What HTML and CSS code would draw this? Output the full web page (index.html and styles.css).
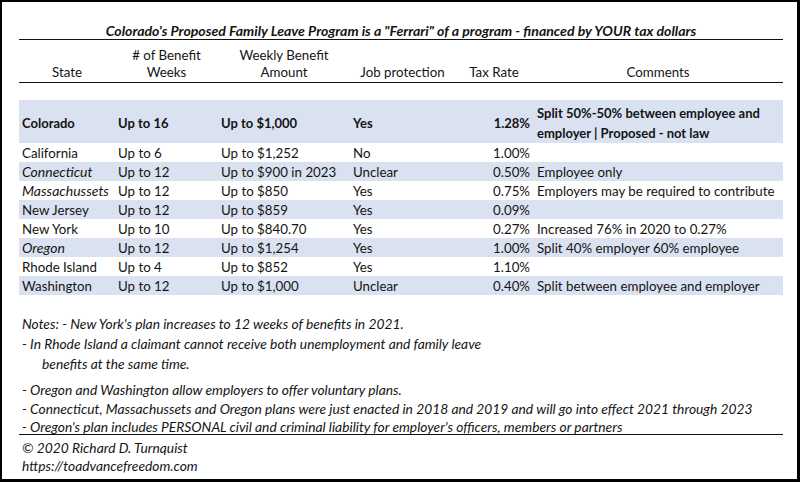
FILE: index.html
```html
<!DOCTYPE html>
<html lang="en">
<head>
<meta charset="utf-8">
<title>Colorado Family Leave Program</title>
<link rel="stylesheet" href="styles.css">
</head>
<body>
<div class="frame">
  <div class="sheet">
    <h1 class="title">Colorado's Proposed Family Leave Program is a "Ferrari" of a program - financed by YOUR tax dollars</h1>
    <table class="grid">
      <colgroup>
        <col class="c-state"><col class="c-weeks"><col class="c-amount"><col class="c-job"><col class="c-tax"><col class="c-comm">
      </colgroup>
      <thead>
        <tr>
          <th>State</th>
          <th># of Benefit<br>Weeks</th>
          <th>Weekly Benefit<br>Amount</th>
          <th>Job protection</th>
          <th>Tax Rate</th>
          <th>Comments</th>
        </tr>
      </thead>
      <tbody>
        <tr class="blank"><td colspan="6"></td></tr>
        <tr class="lead shade">
          <td>Colorado</td><td>Up to 16</td><td>Up to $1,000</td><td>Yes</td><td class="num">1.28%</td>
          <td class="comm">Split 50%-50% between employee and employer | Proposed - not law</td>
        </tr>
        <tr><td>California</td><td>Up to 6</td><td>Up to $1,252</td><td>No</td><td class="num">1.00%</td><td class="comm"></td></tr>
        <tr class="shade"><td class="it">Connecticut</td><td>Up to 12</td><td>Up to $900 in 2023</td><td>Unclear</td><td class="num">0.50%</td><td class="comm">Employee only</td></tr>
        <tr><td class="it">Massachussets</td><td>Up to 12</td><td>Up to $850</td><td>Yes</td><td class="num">0.75%</td><td class="comm">Employers may be required to contribute</td></tr>
        <tr class="shade"><td>New Jersey</td><td>Up to 12</td><td>Up to $859</td><td>Yes</td><td class="num">0.09%</td><td class="comm"></td></tr>
        <tr><td>New York</td><td>Up to 10</td><td>Up to $840.70</td><td>Yes</td><td class="num">0.27%</td><td class="comm">Increased 76% in 2020 to 0.27%</td></tr>
        <tr class="shade"><td class="it">Oregon</td><td>Up to 12</td><td>Up to $1,254</td><td>Yes</td><td class="num">1.00%</td><td class="comm">Split 40% employer 60% employee</td></tr>
        <tr><td>Rhode Island</td><td>Up to 4</td><td>Up to $852</td><td>Yes</td><td class="num">1.10%</td><td class="comm"></td></tr>
        <tr class="shade"><td>Washington</td><td>Up to 12</td><td>Up to $1,000</td><td>Unclear</td><td class="num">0.40%</td><td class="comm">Split between employee and employer</td></tr>
      </tbody>
    </table>
    <div class="notes">
      <p class="note n1">Notes: - New York's plan increases to 12 weeks of benefits in 2021.</p>
      <p class="note n2">- In Rhode Island a claimant cannot receive both unemployment and family leave<br><span class="indent">benefits at the same time.</span></p>
      <p class="note n3">- Oregon and Washington allow employers to offer voluntary plans.</p>
      <p class="note n4">- Connecticut, Massachussets and Oregon plans were just enacted in 2018 and 2019 and will go into effect 2021 through 2023</p>
      <p class="note n5">- Oregon's plan includes PERSONAL civil and criminal liability for employer's officers, members or partners</p>
      <p class="note n6">© 2020 Richard D. Turnquist</p>
      <p class="note n7">https://toadvancefreedom.com</p>
    </div>
  </div>
</div>
</body>
</html>
```

FILE: styles.css
```css
* { box-sizing: border-box; }

html, body {
  margin: 0;
  padding: 0;
  background: #ffffff;
}

.frame {
  width: 800px;
  height: 482px;
  border-style: solid;
  border-color: #000;
  border-width: 2px 3px 3px 2px;
  background: #fff;
  overflow: hidden;
}

.sheet {
  padding: 20px 0 0 17px;
  width: 781px;
  font-family: Lato, "Open Sans", sans-serif;
  font-size: 13.3px;
  color: #141414;
}

.title {
  margin: 0;
  height: 18px;
  line-height: 17px;
  font-size: 14.1px;
  font-weight: 700;
  font-style: italic;
  text-align: center;
  border-bottom: 1px solid #111;
}

.grid {
  width: 764px;
  border-collapse: collapse;
  table-layout: fixed;
}

.c-state { width: 96px; }
.c-weeks { width: 103px; }
.c-amount { width: 132px; }
.c-job { width: 105px; }
.c-tax { width: 78px; }
.c-comm { width: 250px; }

.grid th {
  height: 42px;
  padding: 0;
  line-height: 17.5px;
  font-weight: 400;
  text-align: center;
  vertical-align: bottom;
  border-bottom: 1px solid #111;
  white-space: nowrap;
}

.grid td {
  height: 19px;
  padding: 0 0 0 3px;
  line-height: 18px;
  vertical-align: middle;
  white-space: nowrap;
}

.grid tr.blank td { height: 18px; padding: 0; }

.grid tr.shade td { background: #dae2f1; }

.grid tr.lead td {
  height: 42px;
  font-size: 13px;
  font-weight: 700;
  padding-top: 3px;
}

.grid td.it { font-size: 14px; font-style: italic; }

.grid td.num {
  text-align: right;
  padding: 0 3px 0 0;
}

.grid td.comm { padding-left: 4px; }

.grid tr.lead td.comm {
  white-space: normal;
  line-height: 20px;
  padding-right: 2px;
}

.grid tr.lead td.num { padding-top: 3px; }

.notes {
  width: 764px;
  padding-top: 19px;
  font-size: 13.8px;
  font-style: italic;
}

.note {
  margin: 0;
  padding-left: 3px;
  line-height: 19px;
  white-space: nowrap;
}

.n1 { height: 20px; }
.n2 { height: 46px; line-height: 20px; }
.n3 { height: 20px; }
.n4 { height: 18px; line-height: 18px; }
.n5 { height: 17px; line-height: 17px; border-bottom: 1px solid #111; }
.n6 { padding-top: 3px; line-height: 19px; height: 21px; }
.n7 { height: 18px; }

.indent { padding-left: 20px; }
```
